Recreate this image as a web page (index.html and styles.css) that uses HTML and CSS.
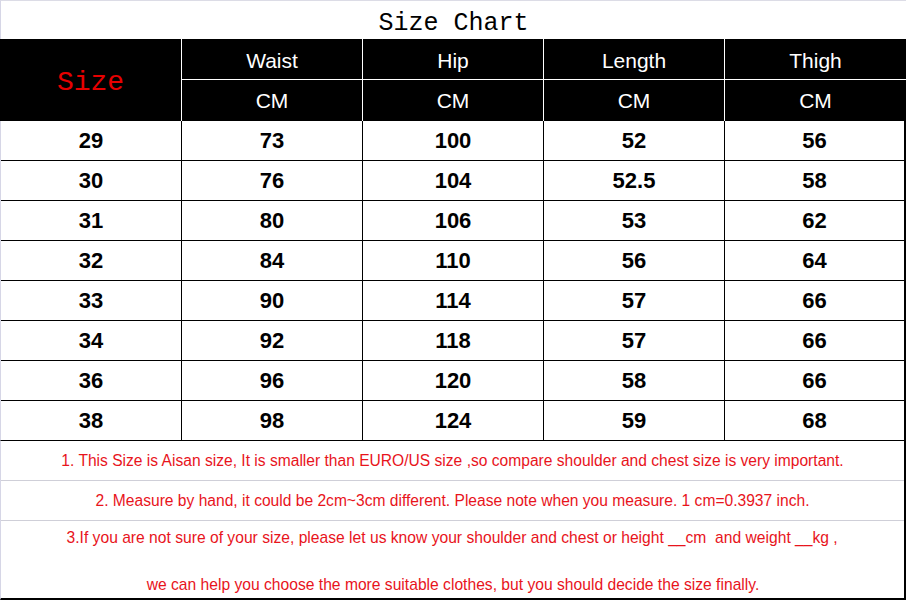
FILE: index.html
```html
<!DOCTYPE html>
<html>
<head>
<meta charset="utf-8">
<link rel="stylesheet" href="styles.css">
</head>
<body>
<div class="chart">
  <div class="title">Size Chart</div>
  <div class="head">
    <div class="hcell size">Size</div>
    <div class="hcell top">Waist</div>
    <div class="hcell top">Hip</div>
    <div class="hcell top">Length</div>
    <div class="hcell top">Thigh</div>
    <div class="hcell">CM</div>
    <div class="hcell">CM</div>
    <div class="hcell">CM</div>
    <div class="hcell">CM</div>
  </div>
  <div class="data">
    <div>29</div><div>73</div><div>100</div><div>52</div><div>56</div>
    <div>30</div><div>76</div><div>104</div><div>52.5</div><div>58</div>
    <div>31</div><div>80</div><div>106</div><div>53</div><div>62</div>
    <div>32</div><div>84</div><div>110</div><div>56</div><div>64</div>
    <div>33</div><div>90</div><div>114</div><div>57</div><div>66</div>
    <div>34</div><div>92</div><div>118</div><div>57</div><div>66</div>
    <div>36</div><div>96</div><div>120</div><div>58</div><div>66</div>
    <div>38</div><div>98</div><div>124</div><div>59</div><div>68</div>
  </div>
  <div class="notes">
    <div class="note n1">1. This Size is Aisan size, It is smaller than EURO/US size ,so compare shoulder and chest size is very important.</div>
    <div class="note n2">2. Measure by hand, it could be 2cm~3cm different. Please note when you measure. 1 cm=0.3937 inch.</div>
    <div class="note n3">
      <span class="sq">3.If you are not sure of your size, please let us know your shoulder and chest or height __cm&nbsp; and weight __kg ,</span>
      <span class="sq">we can help you choose the more suitable clothes, but you should decide the size finally.</span>
    </div>
  </div>
</div>
</body>
</html>
```
FILE: styles.css
```css
html, body {
  margin: 0;
  padding: 0;
  background: #fff;
}
.chart {
  width: 906px;
  height: 601px;
  font-family: "Liberation Sans", Arial, sans-serif;
}
.title {
  height: 39px;
  box-sizing: border-box;
  padding-top: 6px;
  border-top: 1px solid #dcdce6;
  border-left: 1px solid #d6d6e6;
  display: flex;
  align-items: center;
  justify-content: center;
  font-family: "Liberation Mono", "Courier New", monospace;
  font-size: 25px;
  color: #000;
}
.head {
  display: grid;
  grid-template-columns: 181px 180px 180px 180px 181px;
  grid-template-rows: 40px 41px;
  column-gap: 1px;
  row-gap: 1px;
  background: #fff;
}
.hcell {
  background: #000;
  color: #fff;
  font-size: 21px;
  display: flex;
  align-items: center;
  justify-content: center;
}
.hcell.top {
  padding-top: 4px;
}
.hcell.size {
  grid-row: span 2;
  color: #e60000;
  font-family: "Liberation Mono", "Courier New", monospace;
  font-size: 28px;
  padding-top: 5px;
}
.data {
  display: grid;
  grid-template-columns: 180px 180px 180px 180px 179px;
  grid-auto-rows: 39px;
  column-gap: 1px;
  row-gap: 1px;
  background: #000;
  border-left: 1px solid #d6d6e6;
  border-right: 2px solid #000;
  border-bottom: 1px solid #000;
}
.data > div {
  background: #fff;
  display: flex;
  align-items: center;
  justify-content: center;
  font-weight: bold;
  font-size: 22px;
  color: #000;
}
.notes {
  border-left: 1px solid #d6d6e6;
  border-right: 2px solid #000;
  border-bottom: 2px solid #000;
  height: 157px;
}
.note {
  color: #e8141c;
  font-size: 15.6px;
  display: flex;
  align-items: center;
  justify-content: center;
}
.n1 {
  height: 39px;
  border-bottom: 1px solid #cfcfd8;
}
.n2 {
  height: 39px;
  border-bottom: 1px solid #cfcfd8;
}
.n3 {
  height: 77px;
  flex-direction: column;
  justify-content: space-between;
  padding: 7px 0 3px;
  box-sizing: border-box;
}
.sq {
  display: inline-block;
  font-size: 17px;
  transform: scaleX(0.92);
  white-space: nowrap;
}
```
